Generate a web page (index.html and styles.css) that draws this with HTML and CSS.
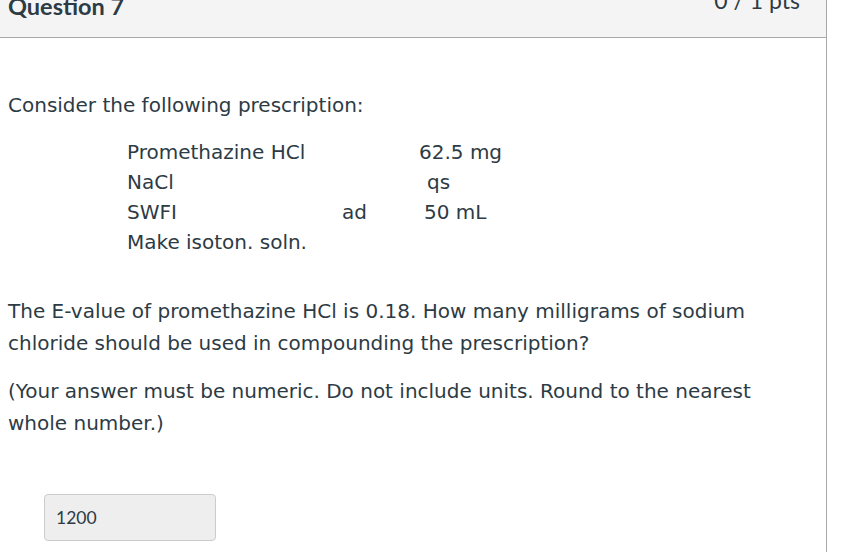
FILE: index.html
```html
<!DOCTYPE html>
<html>
<head>
<meta charset="utf-8">
<link rel="stylesheet" href="styles.css">
</head>
<body>
<div class="card">
  <div class="header">
    <h2 class="title">Question 7</h2>
    <div class="pts">0 / 1 pts</div>
  </div>
  <div class="content">
    <p class="intro">Consider the following prescription:</p>
    <table class="rx">
      <tr><td class="c1">Promethazine HCl</td><td class="c2"></td><td class="c3 v1">62.5 mg</td></tr>
      <tr><td class="c1">NaCl</td><td class="c2"></td><td class="c3 v2">qs</td></tr>
      <tr><td class="c1">SWFI</td><td class="c2">ad</td><td class="c3 v3">50 mL</td></tr>
      <tr><td class="c1">Make isoton. soln.</td><td class="c2"></td><td class="c3"></td></tr>
    </table>
    <p class="q">The E-value of promethazine HCl is 0.18. How many milligrams of sodium chloride should be used in compounding the prescription?</p>
    <p class="q note">(Your answer must be numeric. Do not include units. Round to the nearest whole number.)</p>
    <div class="answer">1200</div>
  </div>
</div>
</body>
</html>
```
FILE: styles.css
```css
html, body {
  margin: 0;
  padding: 0;
  background: #ffffff;
  overflow: hidden;
}
.card {
  width: 827px;
  height: 552px;
  border-right: 1px solid #a8a8a8;
  box-sizing: border-box;
  color: #2d3b45;
}
.header {
  height: 38px;
  box-sizing: border-box;
  background: #f4f4f4;
  border-bottom: 1px solid #a8a8a8;
  display: flex;
  justify-content: space-between;
  align-items: flex-start;
  padding: 0 26px 0 8px;
  font-family: Lato, "Liberation Sans", sans-serif;
}
.title {
  margin: -5px 0 0 0;
  font-size: 23.5px;
  line-height: 23.5px;
  font-weight: 700;
  color: #2d3b45;
}
.pts {
  margin-top: -11px;
  font-size: 23px;
  line-height: 23px;
  color: #2d3b45;
}
.content {
  padding: 0 8px;
  width: 790px;
  font-family: "DejaVu Sans", Verdana, sans-serif;
  font-size: 20px;
  color: #2d3b45;
}
.intro {
  margin: 51px 0 0 0;
  line-height: 32px;
}
.rx {
  border-collapse: collapse;
  margin: 16px 0 0 119px;
}
.rx td {
  padding: 0;
  height: 30px;
  line-height: 30px;
  vertical-align: top;
  white-space: nowrap;
}
.c1 { width: 215px; }
.c2 { width: 77px; }
.rx td.v2 { padding-left: 8px; }
.rx td.v3 { padding-left: 5px; }
.q {
  margin: 38px 0 0 0;
  line-height: 32px;
}
.note {
  margin-top: 16px;
}
.answer {
  margin: 55px 0 0 36px;
  width: 172px;
  height: 47px;
  box-sizing: border-box;
  background: #eeeeee;
  border: 1px solid #cccccc;
  border-radius: 4px;
  font-family: Lato, "Liberation Sans", sans-serif;
  font-size: 17.5px;
  line-height: 45px;
  padding-left: 11px;
  color: #2d3b45;
}
```
